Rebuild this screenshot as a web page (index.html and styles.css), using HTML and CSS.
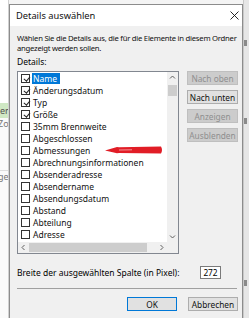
FILE: index.html
```html
<!DOCTYPE html>
<html lang="de">
<head>
    <meta charset="UTF-8">
    <meta name="viewport" content="width=device-width, initial-scale=1.0">
    <title>Details auswählen</title>
    <link rel="stylesheet" href="styles.css">
</head>
<body>
    <div class="desktop">
        <div class="behind-left">
            <div class="bl-top"></div>
            <div class="bl-green">en</div>
            <div class="bl-row">Zo</div>
            <div class="bl-gap"></div>
            <div class="bl-row">ge</div>
        </div>

        <div class="dialog">
            <div class="titlebar">
                <span class="title">Details auswählen</span>
                <svg class="close" width="9" height="9" viewBox="0 0 9 9">
                    <path d="M0.5 0.5 L8.5 8.5 M8.5 0.5 L0.5 8.5" stroke="#111" stroke-width="0.9" fill="none"/>
                </svg>
            </div>

            <div class="content">
                <p class="intro">Wählen Sie die Details aus, die für die Elemente in diesem Ordner angezeigt werden sollen.</p>
                <p class="label">Details:</p>

                <div class="main">
                    <div class="listbox">
                        <div class="list-area">
                            <ul class="rows">
                                <li class="row"><span class="cb checked"></span><span class="txt selected">Name</span></li>
                                <li class="row"><span class="cb checked"></span><span class="txt">Änderungsdatum</span></li>
                                <li class="row"><span class="cb checked"></span><span class="txt">Typ</span></li>
                                <li class="row"><span class="cb checked"></span><span class="txt">Größe</span></li>
                                <li class="row"><span class="cb"></span><span class="txt">35mm Brennweite</span></li>
                                <li class="row"><span class="cb"></span><span class="txt">Abgeschlossen</span></li>
                                <li class="row"><span class="cb"></span><span class="txt">Abmessungen</span></li>
                                <li class="row"><span class="cb"></span><span class="txt">Abrechnungsinformationen</span></li>
                                <li class="row"><span class="cb"></span><span class="txt">Absenderadresse</span></li>
                                <li class="row"><span class="cb"></span><span class="txt">Absendername</span></li>
                                <li class="row"><span class="cb"></span><span class="txt">Absendungsdatum</span></li>
                                <li class="row"><span class="cb"></span><span class="txt">Abstand</span></li>
                                <li class="row"><span class="cb"></span><span class="txt">Abteilung</span></li>
                                <li class="row"><span class="cb"></span><span class="txt">Adresse</span></li>
                                <li class="row"><span class="cb"></span><span class="txt">Aktenzeichen</span></li>
                            </ul>
                            <div class="vscroll">
                                <svg class="arrow" width="11" height="11" viewBox="0 0 11 11"><path d="M3 6.5 L5.5 4 L8 6.5" stroke="#606060" fill="none"/></svg>
                                <div class="vthumb"></div>
                                <div class="vtrack"></div>
                                <svg class="arrow" width="11" height="11" viewBox="0 0 11 11"><path d="M3 4.5 L5.5 7 L8 4.5" stroke="#606060" fill="none"/></svg>
                            </div>
                        </div>
                        <div class="hscroll">
                            <svg class="arrow" width="11" height="11" viewBox="0 0 11 11"><path d="M6.5 3 L4 5.5 L6.5 8" stroke="#606060" fill="none"/></svg>
                            <div class="hthumb"></div>
                            <div class="htrack"></div>
                            <svg class="arrow" width="11" height="11" viewBox="0 0 11 11"><path d="M4.5 3 L7 5.5 L4.5 8" stroke="#606060" fill="none"/></svg>
                            <div class="corner"></div>
                        </div>

                        <svg class="red-arrow" width="58" height="10" viewBox="0 0 58 10">
                            <path d="M0 5.5 L12 2 L14 2.3 L56 1.5 Q58 5 56 8.5 L14 8 L12 8.3 Z" fill="#e11d26"/>
                            <path d="M14 5 L27 4.8" stroke="#f6a0a4" stroke-width="0.9"/>
                        </svg>
                    </div>

                    <div class="side-buttons">
                        <button class="btn" disabled>Nach oben</button>
                        <button class="btn">Nach unten</button>
                        <button class="btn" disabled>Anzeigen</button>
                        <button class="btn" disabled>Ausblenden</button>
                    </div>
                </div>

                <div class="width-row">
                    <span>Breite der ausgewählten Spalte (in Pixel):</span>
                    <span class="num-box">272</span>
                </div>

                <div class="separator"></div>

                <div class="footer">
                    <button class="btn btn-ok">OK</button>
                    <button class="btn">Abbrechen</button>
                </div>
            </div>
        </div>

        <div class="behind-right">
            <div class="br-mark m1"></div>
            <div class="br-mark m2"></div>
            <div class="br-mark m3"></div>
        </div>
    </div>
</body>
</html>
```

FILE: styles.css
```css
body {
    margin: 0;
    padding: 0;
    font-family: "Noto Sans", "DejaVu Sans", sans-serif;
    font-size: 8.5px;
    color: #000;
    background-color: #f4f4f4;
}
.desktop {
    display: flex;
    width: 249px;
    height: 318px;
    overflow: hidden;
}

/* window behind the dialog */
.behind-left {
    width: 9px;
    flex-shrink: 0;
    background-color: #fafafa;
    border-right: 1px solid #d0d0d0;
    box-sizing: border-box;
    color: #777;
    font-size: 9px;
    overflow: hidden;
    white-space: nowrap;
}
.bl-top {
    height: 103px;
    background-color: #fff;
}
.bl-green {
    height: 15px;
    line-height: 15px;
    background-color: #cfe8c4;
    color: #555;
}
.bl-row {
    height: 12px;
    line-height: 12px;
    text-indent: -2px;
}
.bl-gap {
    height: 40px;
    border-bottom: 1px solid #ddd;
}

.dialog {
    width: 234px;
    flex-shrink: 0;
    margin-top: 4px;
    background-color: #f0f0f0;
    border: 1px solid #8c8c8c;
    border-bottom: none;
    box-sizing: border-box;
}
.titlebar {
    display: flex;
    align-items: center;
    justify-content: space-between;
    height: 21px;
    padding: 0 3px 0 6px;
    background-color: #fff;
}
.title {
    font-size: 9.3px;
    color: #111;
}

.content {
    padding: 8px 4px 0 7px;
}
.intro {
    margin: 0 -3px 0 0;
    font-size: 7.7px;
    line-height: 9.5px;
    color: #111;
    letter-spacing: -0.25px;
}
.label {
    margin: 4px 0 0;
    line-height: 10px;
}

.main {
    display: flex;
    gap: 8px;
    margin-top: 4px;
}
.listbox {
    position: relative;
    width: 163px;
    height: 183px;
    border: 1px solid #828790;
    box-sizing: border-box;
    background-color: #fff;
    display: flex;
    flex-direction: column;
}
.list-area {
    display: flex;
    height: 170px;
    overflow: hidden;
}
.rows {
    list-style: none;
    margin: 0;
    padding: 0 0 0 3px;
    flex: 1;
}
.row {
    display: flex;
    align-items: center;
    height: 12px;
}
.cb {
    width: 9px;
    height: 9px;
    border: 1px solid #333;
    box-sizing: border-box;
    background-color: #fff;
    flex-shrink: 0;
    margin-right: 2px;
    position: relative;
}
.cb.checked::after {
    content: "";
    position: absolute;
    left: 2.5px;
    top: 0;
    width: 2.5px;
    height: 5px;
    border-right: 1px solid #222;
    border-bottom: 1px solid #222;
    transform: rotate(40deg);
}
.txt {
    line-height: 11px;
    padding: 0 1px;
    color: #111;
    white-space: nowrap;
}
.txt.selected {
    background-color: #0078d7;
    color: #fff;
    padding-right: 3px;
}

.vscroll {
    width: 11px;
    flex-shrink: 0;
    background-color: #f0f0f0;
    display: flex;
    flex-direction: column;
}
.vthumb {
    height: 11px;
    margin: 2px 1px 0;
    background-color: #cdcdcd;
}
.vtrack {
    flex: 1;
}
.hscroll {
    display: flex;
    height: 11px;
    background-color: #f0f0f0;
}
.hthumb {
    width: 118px;
    margin: 1px 0;
    background-color: #cdcdcd;
}
.htrack {
    flex: 1;
}
.corner {
    width: 11px;
    background-color: #f0f0f0;
}
.arrow {
    display: block;
    flex-shrink: 0;
}
.red-arrow {
    position: absolute;
    left: 87px;
    top: 73px;
}

.side-buttons {
    display: flex;
    flex-direction: column;
    gap: 5px;
}
.btn {
    width: 51px;
    height: 14px;
    padding: 0;
    font-family: inherit;
    font-size: 8.3px;
    color: #111;
    background-color: #e1e1e1;
    border: 1px solid #adadad;
    box-sizing: border-box;
}
.btn:disabled {
    background-color: #cccccc;
    border-color: #bfbfbf;
    color: #8f8f8f;
}

.width-row {
    display: flex;
    justify-content: space-between;
    align-items: center;
    margin-top: 12px;
    padding-right: 17px;
}
.num-box {
    width: 21px;
    height: 13px;
    line-height: 11px;
    text-align: center;
    background-color: #fff;
    border: 1px solid #7a7a7a;
    box-sizing: border-box;
    font-size: 8.3px;
}
.separator {
    height: 1px;
    margin: 9px 1px 0 0;
    background-color: #a0a0a0;
}
.footer {
    display: flex;
    justify-content: flex-end;
    gap: 11px;
    margin-top: 8px;
}
.footer .btn {
    width: 50px;
}
.footer .btn-ok {
    border-color: #0078d7;
}

.behind-right {
    flex: 1;
    position: relative;
    background-color: #e6e6e6;
    border-left: 1px solid #c8c8c8;
}
.br-mark {
    position: absolute;
    left: 0;
    width: 3px;
    height: 6px;
    background-color: #8a8a8a;
}
.m1 { top: 40px; }
.m2 { top: 118px; }
.m3 { top: 280px; }
```
